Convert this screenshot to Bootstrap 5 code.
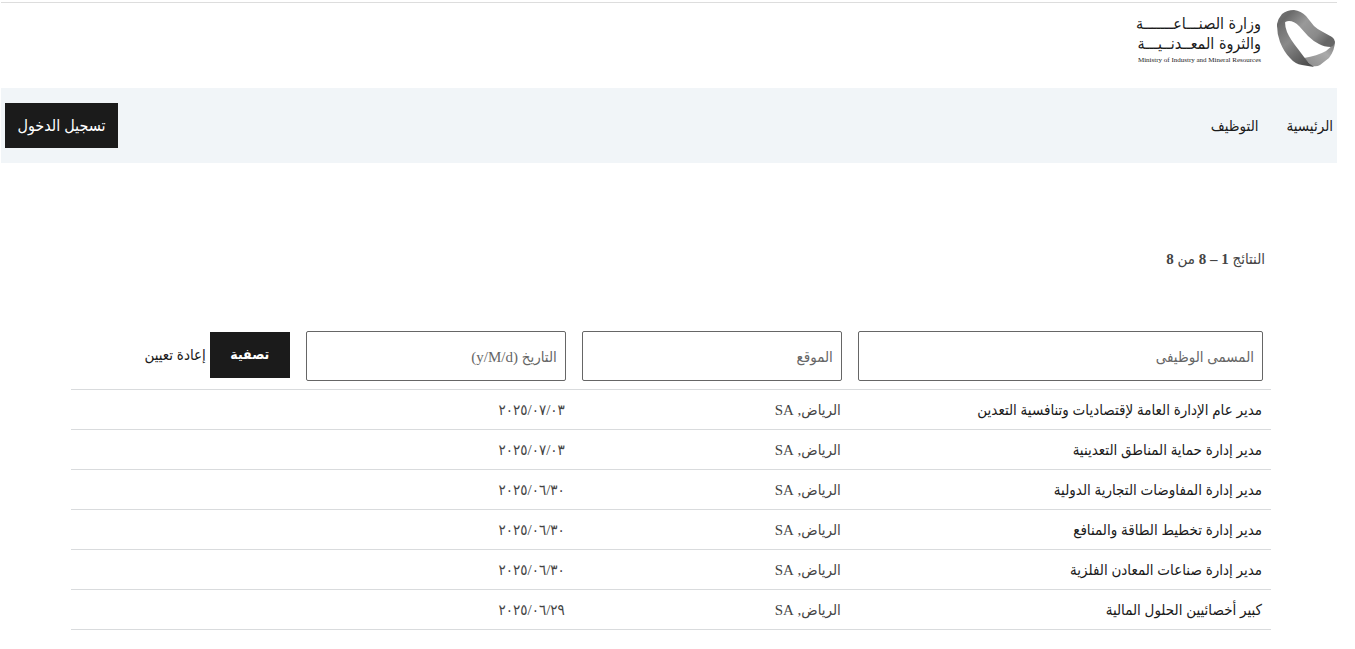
<!DOCTYPE html>
<html lang="ar" dir="rtl">
<head>
<meta charset="utf-8">
<meta name="viewport" content="width=device-width, initial-scale=1">
<title>وزارة الصناعة والثروة المعدنية</title>
<link href="https://cdn.jsdelivr.net/npm/bootstrap@5.3.0/dist/css/bootstrap.min.css" rel="stylesheet">
<style>
body{font-family:"Liberation Serif","DejaVu Sans Condensed",serif;font-size:15px;line-height:20px;color:#444;background:#fff}
.page-shell{margin:2px 18px 0 1px;border-top:1px solid #ddd}
.site-head{height:85px;padding:7px 2px}
.brand-words{font-family:"DejaVu Sans Condensed",sans-serif;font-size:16px;line-height:20px;color:#1c1c1c;white-space:nowrap}
.brand-latin{font-family:"Liberation Serif",serif;font-size:7px;line-height:12px}
.site-nav{background:#f1f5f8;min-height:75px;padding:0 4px}
.nav-links{gap:28px}
.site-nav a{color:#1b1b1b;text-decoration:none}
.btn-ink{--bs-btn-color:#fff;--bs-btn-bg:#1b1b1b;--bs-btn-border-color:#1b1b1b;--bs-btn-hover-color:#fff;--bs-btn-hover-bg:#333;--bs-btn-border-radius:0;--bs-btn-line-height:20px;font-family:inherit}
.btn-signin{--bs-btn-font-size:16px;width:113px;height:45px;padding:0}
.btn-filter{--bs-btn-font-size:14px;width:80px;height:46px;padding:0;font-weight:700}
.jobs-area{padding-left:4px}
.jobs-wrap{max-width:1200px;margin:0 auto}
.results-line{padding:86px 6px 61px}
.jobs-table{table-layout:fixed;--bs-table-bg:transparent;--bs-table-color:#444;margin:0}
.jobs-table th,.jobs-table td{padding:0 8px;border-bottom:1px solid #d9dbdd;text-align:right;white-space:nowrap}
.jobs-table thead th{padding:1px 8px 8px;font-weight:400;vertical-align:top}
.jobs-table .filter-actions{padding-top:1px}
.jobs-table td{height:40px;padding:1px 9px 0;vertical-align:middle}
.jobs-table a,.link-reset{color:#1b1b1b;text-decoration:none}
.jobs-table .form-control{height:50px;border:1px solid #666;border-radius:2px;padding:2px 8px 0;font-size:15px;color:#444}
.jobs-table .form-control::placeholder{color:#666;opacity:1}
.w-title{width:35.1%}.w-mid{width:23%}.w-act{width:18.9%}
</style>
</head>
<body>
<div class="page-shell">
<header class="site-head d-flex align-items-start">
<a href="#" class="d-flex align-items-start text-decoration-none gap-3" aria-label="وزارة الصناعة والثروة المعدنية">
<svg width="58" height="60" viewBox="0 0 58 60" aria-hidden="true">
<defs>
<linearGradient id="ga" x1="0" y1="0" x2="1" y2=".6"><stop offset="0" stop-color="#777"/><stop offset=".2" stop-color="#6a6a6a"/><stop offset=".5" stop-color="#999"/><stop offset=".8" stop-color="#8a8a8a"/><stop offset="1" stop-color="#666"/></linearGradient>
<linearGradient id="gb" x1="0" y1="0" x2=".7" y2="1"><stop offset="0" stop-color="#666"/><stop offset=".45" stop-color="#8a8a8a"/><stop offset="1" stop-color="#505050"/></linearGradient>
<linearGradient id="gc" x1="0" y1="1" x2="1" y2="0"><stop offset="0" stop-color="#8a8a8a"/><stop offset=".6" stop-color="#aaa"/><stop offset="1" stop-color="#777"/></linearGradient>
</defs>
<path fill="url(#gc)" d="M58 31Q58 40 52 48L43 55Q40 57 35 56L27 48Q40 46 49 41L56 35Z"/>
<path fill="url(#gb)" d="M0 15Q0 24 3 32Q7 42 13 48Q18 54 25 55L37 57Q31 53 27 47L21 39Q13 29 10 22Q8 17 8 12L3 11Z"/>
<path fill="url(#ga)" d="M0 18Q-1 11 5 4Q10 0 17 0Q24 1 29 6L37 16Q40 19 46 22L55 27Q58 29 58 32Q57 36 54 37Q47 37 42 34Q36 31 31 26L22 16Q17 11 12 11Q8 11 7 14Q2 13 0 18Z"/>
</svg>
<span class="brand-words text-end d-block pt-1">
<span class="d-block">وزارة الصنـــاعـــــــة</span>
<span class="d-block">والثروة المعــدنــيـــة</span>
<span class="brand-latin d-block" dir="ltr">Ministry of Industry and Mineral Resources</span>
</span>
</a>
</header>
<nav class="site-nav d-flex align-items-center justify-content-between">
<div class="nav-links d-flex"><a href="#">الرئيسية</a><a href="#">التوظيف</a></div>
<button type="button" class="btn btn-ink btn-signin">تسجيل الدخول</button>
</nav>
<main class="jobs-area">
<div class="jobs-wrap">
<div class="results-line">النتائج <b>1 – 8</b> من <b>8</b></div>
<table class="table jobs-table">
<thead><tr>
<th class="w-title"><input class="form-control" type="text" placeholder="المسمى الوظيفى" aria-label="المسمى الوظيفى"></th>
<th class="w-mid"><input class="form-control" type="text" placeholder="الموقع" aria-label="الموقع"></th>
<th class="w-mid"><input class="form-control" type="text" placeholder="التاريخ (y/M/d)" aria-label="التاريخ"></th>
<th class="w-act"><div class="filter-actions d-flex align-items-center gap-1"><button type="button" class="btn btn-ink btn-filter">تصفية</button><a href="#" class="link-reset">إعادة تعيين</a></div></th>
</tr></thead>
<tbody>
<tr><td><a href="#">مدير عام الإدارة العامة لإقتصاديات وتنافسية التعدين</a></td><td>الرياض, SA</td><td>٢٠٢٥/٠٧/٠٣</td><td></td></tr>
<tr><td><a href="#">مدير إدارة حماية المناطق التعدينية</a></td><td>الرياض, SA</td><td>٢٠٢٥/٠٧/٠٣</td><td></td></tr>
<tr><td><a href="#">مدير إدارة المفاوضات التجارية الدولية</a></td><td>الرياض, SA</td><td>٢٠٢٥/٠٦/٣٠</td><td></td></tr>
<tr><td><a href="#">مدير إدارة تخطيط الطاقة والمنافع</a></td><td>الرياض, SA</td><td>٢٠٢٥/٠٦/٣٠</td><td></td></tr>
<tr><td><a href="#">مدير إدارة صناعات المعادن الفلزية</a></td><td>الرياض, SA</td><td>٢٠٢٥/٠٦/٣٠</td><td></td></tr>
<tr><td><a href="#">كبير أخصائيين الحلول المالية</a></td><td>الرياض, SA</td><td>٢٠٢٥/٠٦/٢٩</td><td></td></tr>
</tbody>
</table>
</div>
</main>
</div>
<script src="https://cdn.jsdelivr.net/npm/bootstrap@5.3.0/dist/js/bootstrap.bundle.min.js"></script>
</body>
</html>
